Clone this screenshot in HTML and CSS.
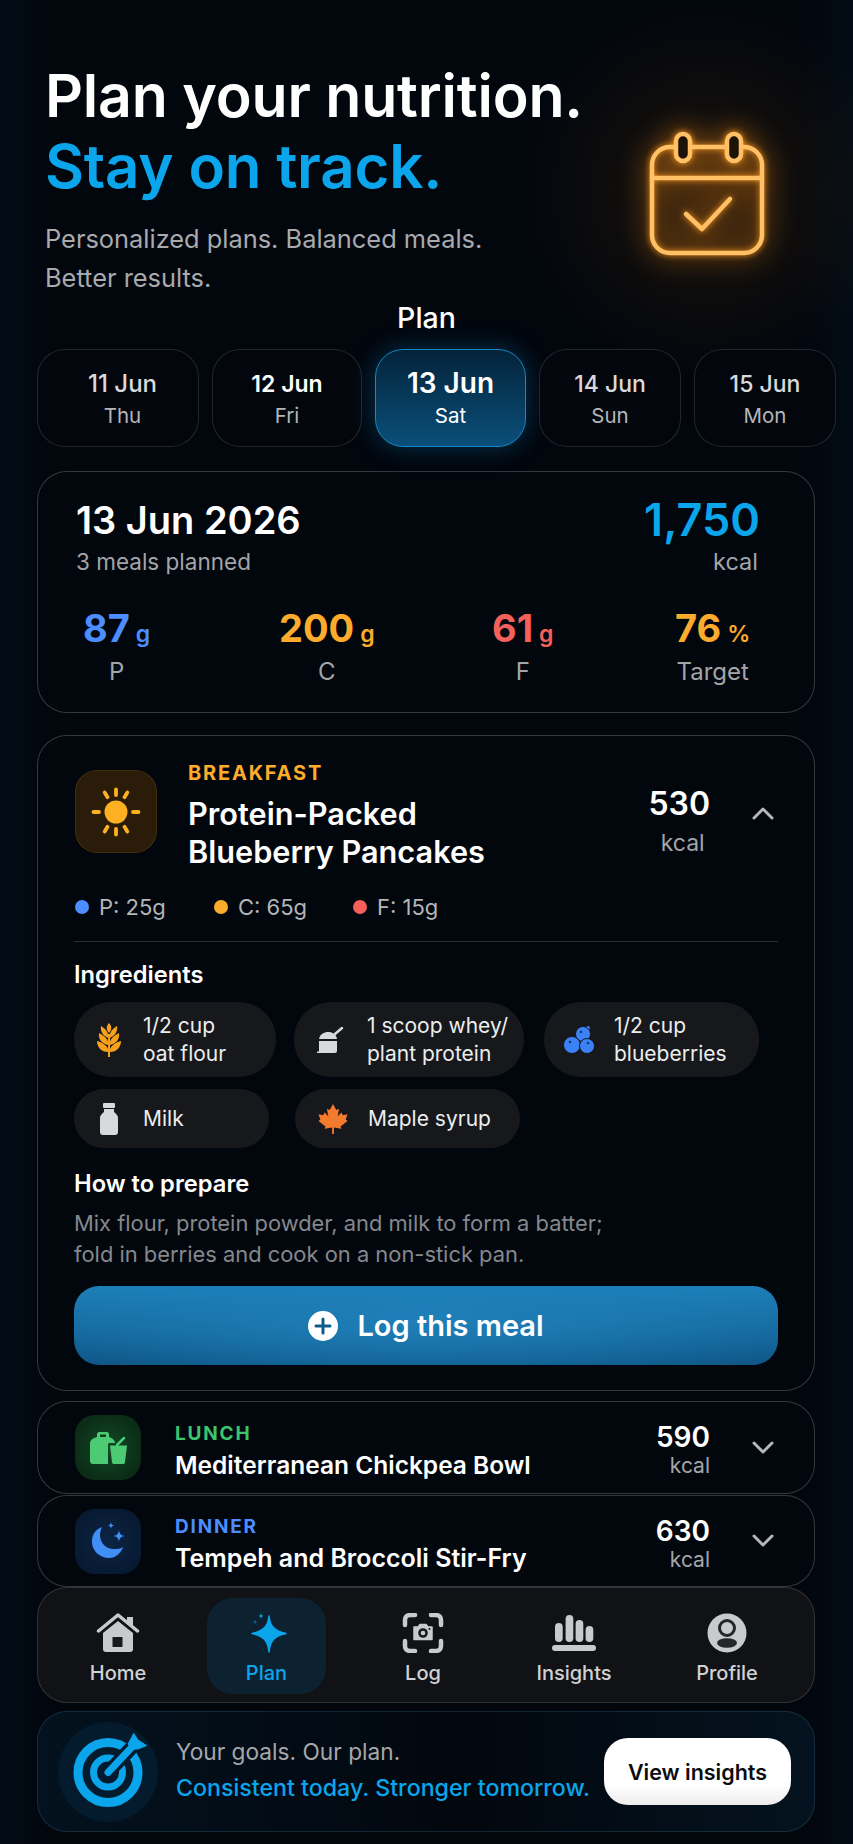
FILE: index.html
```html
<!DOCTYPE html>
<html lang="en">
<head>
  <meta charset="UTF-8">
  <meta name="viewport" content="width=device-width, initial-scale=1">
  <title>Plan</title>
  <link rel="stylesheet" href="styles.css">
</head>
<body>
<div class="page">

  <header class="hero">
    <div class="hero-text">
      <h1>Plan your nutrition.<br><span class="blue">Stay on track.</span></h1>
      <p>Personalized plans. Balanced meals.<br>Better results.</p>
    </div>
    <svg class="hero-icon" viewBox="0 0 125 132" fill="none" stroke="#ffc066" stroke-width="4.500" stroke-linecap="round" stroke-linejoin="round">
      <rect x="6" y="16" width="110" height="106" rx="18" fill="rgba(255,140,20,.04)"/>
      <path d="M6 47H116"/>
      <rect x="30" y="3" width="14" height="27" rx="7" fill="#1d1206"/>
      <rect x="81" y="3" width="14" height="27" rx="7" fill="#1d1206"/>
      <path d="M40 83L56 98L84 68"/>
    </svg>
  </header>

  <h2 class="plan-title">Plan</h2>

  <div class="days">
    <div class="day day-first"><b>11 Jun</b><span>Thu</span></div>
    <div class="day day-bright"><b>12 Jun</b><span>Fri</span></div>
    <div class="day day-active"><b>13 Jun</b><span>Sat</span></div>
    <div class="day"><b>14 Jun</b><span>Sun</span></div>
    <div class="day"><b>15 Jun</b><span>Mon</span></div>
  </div>

  <section class="card summary">
    <div class="summary-top">
      <div>
        <div class="summary-date">13 Jun 2026</div>
        <div class="muted">3 meals planned</div>
      </div>
      <div class="summary-kcal">
        <div class="summary-num">1,750</div>
        <div class="muted">kcal</div>
      </div>
    </div>
    <div class="totals">
      <div class="total"><div class="total-val c-blue">87<small>g</small></div><div class="muted">P</div></div>
      <div class="total"><div class="total-val c-orange">200<small>g</small></div><div class="muted">C</div></div>
      <div class="total"><div class="total-val c-red">61<small>g</small></div><div class="muted">F</div></div>
      <div class="total"><div class="total-val c-orange">76<small>%</small></div><div class="muted">Target</div></div>
    </div>
  </section>

  <section class="card meal-open">
    <div class="meal-head">
      <div class="meal-icon big sun-bg">
        <svg width="52" height="52" viewBox="0 0 52 52" fill="#fdb022" stroke="#fdb022" stroke-width="3.800" stroke-linecap="round">
          <circle cx="26" cy="26" r="11.500" stroke="none"/>
          <path d="M26 3.500V9M26 43V48.500M3.500 26H9M43 26H48.500M14.700 6.500L17.500 11.200M34.500 40.800L37.300 45.500M37.300 6.500L34.500 11.200M17.500 40.800L14.700 45.500"/>
        </svg>
      </div>
      <div class="meal-text">
        <div class="meal-type c-orange">BREAKFAST</div>
        <div class="meal-name">Protein-Packed<br>Blueberry Pancakes</div>
      </div>
      <div class="meal-kcal">
        <div class="meal-num">530</div>
        <div class="muted">kcal</div>
      </div>
      <svg class="chev" width="24" height="14" viewBox="0 0 24 14" fill="none" stroke="#b5b7ba" stroke-width="3" stroke-linecap="round" stroke-linejoin="round"><path d="M3 12L12 3L21 12"/></svg>
    </div>

    <div class="macros">
      <span class="macro"><i class="dot bg-blue"></i>P: 25g</span>
      <span class="macro"><i class="dot bg-orange"></i>C: 65g</span>
      <span class="macro"><i class="dot bg-red"></i>F: 15g</span>
    </div>

    <hr class="line">

    <h3>Ingredients</h3>
    <div class="chips">
      <div class="chip chip-1">
        <svg width="26" height="36" viewBox="0 0 26 36" fill="#f5a11c">
          <path d="M13 12V35" stroke="#f5a11c" stroke-width="2" fill="none"/>
          <path d="M13 1C16 4 16 8 13 11C10 8 10 4 13 1Z"/>
          <path d="M13.800 16C13 11 16 7 21 4C22 9 19 14 13.800 16Z"/>
          <path d="M12.200 16C13 11 10 7 5 4C4 9 7 14 12.200 16Z"/>
          <path d="M13.800 23C13 18 17 14 23 11C24 17 20 22 13.800 23Z"/>
          <path d="M12.200 23C13 18 9 14 3 11C2 17 6 22 12.200 23Z"/>
          <path d="M13.800 30C13 25 18 21 25 19C25 25 21 30 13.800 30Z"/>
          <path d="M12.200 30C13 25 8 21 1 19C1 25 5 30 12.200 30Z"/>
        </svg>
        <span>1/2 cup<br>oat flour</span>
      </div>
      <div class="chip chip-2">
        <svg width="30" height="30" viewBox="0 0 30 30" fill="#d8d9db">
          <path d="M3 14C4 9 8 7 12 7C17 7 20 9 21 14Z"/>
          <path d="M3 16H21V26C21 27 20 28 19 28H1V26.500H3Z"/>
          <path d="M19 9L26 3" fill="none" stroke="#d8d9db" stroke-width="2.500" stroke-linecap="round"/>
        </svg>
        <span>1 scoop whey/<br>plant protein</span>
      </div>
      <div class="chip chip-3">
        <svg width="32" height="30" viewBox="0 0 32 30" fill="#3b82f6" stroke="#16181c">
          <circle cx="25" cy="3" r="2" stroke="none"/>
          <circle cx="20" cy="9" r="7.500"/>
          <circle cx="9" cy="20" r="8.500"/>
          <circle cx="24" cy="21" r="7.500"/>
          <circle cx="18" cy="7" r="1.300" fill="#123a70" stroke="none"/>
          <circle cx="7" cy="17" r="1.300" fill="#123a70" stroke="none"/>
          <circle cx="25" cy="18" r="1.300" fill="#123a70" stroke="none"/>
        </svg>
        <span>1/2 cup<br>blueberries</span>
      </div>
      <div class="chip chip-4">
        <svg width="20" height="32" viewBox="0 0 20 32" fill="#d8d9db">
          <rect x="4" y="0" width="12" height="5" rx="1"/>
          <path d="M5 6H15V9C17 11 19 12 19 15V29C19 31 18 32 16 32H4C2 32 1 31 1 29V15C1 12 3 11 5 9Z"/>
        </svg>
        <span>Milk</span>
      </div>
      <div class="chip chip-5">
        <svg width="30" height="32" viewBox="0 0 32 32" fill="#f47a2e">
          <path d="M16 0L19.500 6.500L22.500 5L21 13L25 9L26.500 12L31.500 11L29.500 16.500L31.500 18L24 24L25 26.500L17 25V32H15V25L7 26.500L8 24L.5 18L2.500 16.500L.5 11L5.500 12L7 9L11 13L9.500 5L12.500 6.500Z"/>
        </svg>
        <span>Maple syrup</span>
      </div>
    </div>

    <h3 class="prep-title">How to prepare</h3>
    <p class="prep">Mix flour, protein powder, and milk to form a batter;<br>fold in berries and cook on a non-stick pan.</p>

    <button class="log-btn">
      <svg width="30" height="30" viewBox="0 0 30 30"><circle cx="15" cy="15" r="15" fill="#fff"/><path d="M15 8V22M8 15H22" stroke="#0f5a8c" stroke-width="3" stroke-linecap="round"/></svg>
      Log this meal
    </button>
  </section>

  <section class="card meal-row lunch">
    <div class="meal-icon green-bg">
      <svg width="37" height="34" viewBox="0 0 37 34" fill="#4ccb74">
        <path fill-rule="evenodd" d="M7 6V3C7 2 8 1 9 1H17C18 1 19 2 19 3V6C22 7 25 9 25 12H19C18 12 18 13 18 14V33H3C1 33 0 32 0 30V13C0 9 3 7 7 6ZM10 3.500V6H16V3.500Z"/>
        <path d="M20 14.500H37L35 31C35 32.500 34 33 33 33H24C23 33 22 32.500 22 31Z"/>
        <path d="M27 14L34 7" fill="none" stroke="#4ccb74" stroke-width="2.500" stroke-linecap="round"/>
      </svg>
    </div>
    <div class="meal-text">
      <div class="meal-type small c-green">LUNCH</div>
      <div class="meal-name small">Mediterranean Chickpea Bowl</div>
    </div>
    <div class="meal-kcal small">
      <div class="meal-num">590</div>
      <div class="muted">kcal</div>
    </div>
    <svg class="chev" width="24" height="14" viewBox="0 0 24 14" fill="none" stroke="#b5b7ba" stroke-width="3" stroke-linecap="round" stroke-linejoin="round"><path d="M3 2L12 11L21 2"/></svg>
  </section>

  <section class="card meal-row dinner">
    <div class="meal-icon blue-bg">
      <svg width="36" height="38" viewBox="0 0 36 38" fill="#3f8ff7">
        <path d="M12 5C4 8 2 14 2 20C2 29 10 36 19 36C26 36 31 31 33 25C30 27 27 27 24 27C16 27 10 21 10 13C10 10 11 7 12 5Z"/>
        <path d="M29 8C29.500 12 31 13.500 35 14C31 14.500 29.500 16 29 20C28.500 16 27 14.500 23 14C27 13.500 28.500 12 29 8Z"/>
        <path d="M21 0C21.300 2.500 22 3.200 24.500 3.500C22 3.800 21.300 4.500 21 7C20.700 4.500 20 3.800 17.500 3.500C20 3.200 20.700 2.500 21 0Z"/>
      </svg>
    </div>
    <div class="meal-text">
      <div class="meal-type small c-blue">DINNER</div>
      <div class="meal-name small">Tempeh and Broccoli Stir-Fry</div>
    </div>
    <div class="meal-kcal small">
      <div class="meal-num">630</div>
      <div class="muted">kcal</div>
    </div>
    <svg class="chev" width="24" height="14" viewBox="0 0 24 14" fill="none" stroke="#b5b7ba" stroke-width="3" stroke-linecap="round" stroke-linejoin="round"><path d="M3 2L12 11L21 2"/></svg>
  </section>

  <nav class="nav">
    <a class="nav-item nav-home">
      <svg width="44" height="40" viewBox="0 0 44 40">
        <path d="M2.500 18L22 2L41.500 18" fill="none" stroke="#c9cacc" stroke-width="3.500" stroke-linecap="round" stroke-linejoin="round"/>
        <path d="M31 4H37V13L31 8Z" fill="#c9cacc"/>
        <path d="M7 20L22 8L37 20V36C37 38 36 39 34 39H10C8 39 7 38 7 36Z" fill="#c9cacc"/>
        <rect x="16.500" y="24" width="10" height="10" fill="#17191c"/>
      </svg>
      Home
    </a>
    <a class="nav-item nav-plan">
      <svg width="44" height="40" viewBox="0 0 44 40" fill="#0ba5ec">
        <path d="M24 3C25 13 29 18 41 20.500C29 23 25 28 24 39C23 28 19 23 7 20.500C19 18 23 13 24 3Z" stroke="#0ba5ec" stroke-width="1.500" stroke-linejoin="round"/>
        <path d="M16 0C16.200 2 17 2.800 19 3C17 3.200 16.200 4 16 6C15.800 4 15 3.200 13 3C15 2.800 15.800 2 16 0Z"/>
        <circle cx="10" cy="9" r="1.500" opacity=".45"/>
      </svg>
      Plan
    </a>
    <a class="nav-item nav-log">
      <svg width="44" height="40" viewBox="0 0 44 40">
        <path d="M4 12V7C4 4 6 2 9 2H14M30 2H35C38 2 40 4 40 7V12M40 28V33C40 36 38 38 35 38H30M14 38H9C6 38 4 36 4 33V28" fill="none" stroke="#c9cacc" stroke-width="4.500" stroke-linecap="round"/>
        <path d="M13 14H17L19 11.500H25L27 14H31V26.500H13Z" fill="#c9cacc" stroke="#c9cacc" stroke-width="1.500" stroke-linejoin="round"/>
        <circle cx="22" cy="20" r="4.800" fill="#17191c"/>
        <circle cx="22" cy="20" r="2.300" fill="#c9cacc"/>
        <circle cx="28.500" cy="16" r="1" fill="#17191c"/>
      </svg>
      Log
    </a>
    <a class="nav-item">
      <svg width="44" height="40" viewBox="0 0 44 40" fill="#c9cacc">
        <rect x="3" y="10" width="7.700" height="19" rx="3.800"/>
        <rect x="13.600" y="2" width="7.700" height="27" rx="3.800"/>
        <rect x="23.600" y="7" width="7.700" height="22" rx="3.800"/>
        <rect x="33.600" y="13" width="7.700" height="16" rx="3.800"/>
        <rect x="0" y="32" width="44" height="6" rx="3"/>
      </svg>
      Insights
    </a>
    <a class="nav-item">
      <svg width="40" height="40" viewBox="0 0 40 40">
        <circle cx="20" cy="20" r="19.500" fill="#c9cacc"/>
        <circle cx="20" cy="15" r="7.500" fill="#c9cacc" stroke="#24262a" stroke-width="3"/>
        <ellipse cx="20" cy="30" rx="10" ry="4.800" fill="#24262a"/>
      </svg>
      Profile
    </a>
  </nav>

  <section class="banner">
    <div class="target">
      <svg class="target-icon" width="76" height="76" viewBox="0 0 76 76" fill="none">
        <circle cx="38" cy="38.500" r="30" stroke="#0ba5ec" stroke-width="9"/>
        <circle cx="38" cy="38.500" r="14.500" stroke="#0ba5ec" stroke-width="7"/>
        <path d="M38 38.500L66 9" stroke="#041b2e" stroke-width="14"/>
        <path d="M38 38.500L62 13" stroke="#0ba5ec" stroke-width="7" stroke-linecap="round"/>
        <path d="M58 10L63.800 -.5L68 6L76.500 11.500L68 15L62 15Z" fill="#0ba5ec" stroke="#0ba5ec" stroke-linejoin="round"/>
      </svg>
    </div>
    <div class="banner-text">
      <div class="banner-line">Your goals. Our plan.</div>
      <div class="banner-line c-sky">Consistent today. Stronger tomorrow.</div>
    </div>
    <button class="insights-btn">View insights</button>
  </section>

</div>
</body>
</html>
```

FILE: styles.css
```css
* {
  box-sizing: border-box;
}
html, body {
  margin: 0;
  padding: 0;
}
body {
  width: 853px;
  height: 1844px;
  overflow: hidden;
  font-family: Inter, "Noto Sans", sans-serif;
  color: #fff;
  background:
    radial-gradient(circle 190px at 706px 190px, rgba(125,72,10,.2), transparent),
    linear-gradient(90deg, #030c15, #02060d 6%, #02060d 94%, #030c15);
}
.page {
  padding: 60px 38px 0 37px;
}

.hero {
  display: flex;
  justify-content: space-between;
  padding-left: 8px;
}
h1 {
  margin: 0;
  font-size: 59px;
  line-height: 71px;
  font-weight: 600;
  letter-spacing: -0.2px;
}
.blue {
  color: #0ba5ec;
  font-size: 60px;
}
.hero-text p {
  margin: 17px 0 0;
  font-size: 25.400px;
  line-height: 39px;
  color: #a8aaad;
}
.hero-icon {
  width: 125px;
  height: 132px;
  margin: 71px 44px 0 0;
  filter: drop-shadow(0 0 3px #ff9a1e) drop-shadow(0 0 14px rgba(255,145,20,.7));
}

.plan-title {
  margin: 5px 0 15px;
  text-align: center;
  font-size: 28.500px;
  line-height: 32px;
  font-weight: 500;
  padding-left: 1px;
}

.days {
  display: grid;
  grid-template-columns: 162px 150px 151px 142px 142px;
  column-gap: 13px;
  margin-right: -22px;
}
.day {
  height: 98px;
  border: 1px solid rgba(255,255,255,.13);
  border-radius: 28px;
  background: #03070d;
  display: flex;
  flex-direction: column;
  align-items: center;
  padding-top: 19px;
  color: #b4b6b9;
}
.day b {
  font-size: 23px;
  line-height: 30px;
  font-weight: 500;
  color: #d9dadb;
}
.day span {
  margin-top: 4px;
  font-size: 20.500px;
  line-height: 26px;
}
.day-first {
  padding-left: 9px;
}
.day-first b {
  font-size: 24px;
}
.day-bright b {
  color: #fff;
  font-weight: 600;
}
.day-active {
  border-color: #1689c8;
  background: linear-gradient(180deg, #04233a, #0a4f7a);
  box-shadow: 0 0 26px rgba(14,135,205,.35);
  padding-top: 17px;
  color: #fff;
}
.day-active b {
  font-size: 28px;
  line-height: 32px;
  font-weight: 600;
  color: #fff;
}

.card {
  border: 1px solid rgba(255,255,255,.2);
  border-radius: 30px;
  background: #02060d;
}
.muted {
  font-size: 22.500px;
  line-height: 28px;
  color: #a3a5a9;
}

.summary {
  height: 242px;
  margin-top: 24px;
  padding: 26px 38px 0;
}
.summary-top {
  display: flex;
  justify-content: space-between;
}
.summary-date {
  font-size: 38px;
  line-height: 44px;
  font-weight: 600;
  margin-bottom: 6px;
}
.summary-kcal {
  text-align: right;
  padding-right: 16px;
}
.summary-kcal .muted {
  padding-right: 2px;
  font-size: 23.500px;
}
.summary-num {
  font-size: 45px;
  line-height: 44px;
  font-weight: 600;
  margin-bottom: 6px;
  color: #0ba5ec;
}
.totals {
  display: grid;
  grid-template-columns: 196px 213px 183px auto;
  justify-items: start;
  margin-top: 29px;
  padding-left: 7px;
}
.total {
  text-align: center;
}
.total .muted {
  font-size: 24px;
}
.total-val {
  font-size: 38px;
  line-height: 46px;
  font-weight: 700;
  margin-bottom: 1px;
}
.total-val small {
  font-size: 23px;
  font-weight: 600;
  margin-left: 6px;
}
.c-blue { color: #4c8dff; }
.c-orange { color: #fdab2c; }
.c-red { color: #f5605a; }
.c-green { color: #3cc56c; }
.c-sky { color: #0ba5ec; }
.bg-blue { background: #4c8dff; }
.bg-orange { background: #fdab2c; }
.bg-red { background: #f5605a; }

.meal-open {
  margin-top: 22px;
  height: 656px;
  padding: 24px 36px 0;
}
.meal-head {
  display: flex;
  align-items: flex-start;
}
.meal-icon {
  flex: none;
  display: flex;
  align-items: center;
  justify-content: center;
  width: 66px;
  height: 65px;
  border-radius: 20px;
}
.meal-icon.big {
  width: 82px;
  height: 83px;
  border-radius: 22px;
  margin: 10px 0 0 1px;
}
.sun-bg {
  background: #2a1c08;
  box-shadow: inset 0 0 0 1px rgba(255,180,60,.12);
}
.green-bg {
  background: radial-gradient(circle at center, #114a25, #0b2c16 75%);
}
.blue-bg {
  background: radial-gradient(circle at center, #0c2444, #081a33 75%);
}
.meal-text {
  margin-left: 31px;
}
.meal-type {
  font-size: 20px;
  line-height: 24px;
  font-weight: 700;
  letter-spacing: 1.800px;
  margin: 1px 0 10px;
}
.meal-name {
  font-size: 30.700px;
  line-height: 38px;
  font-weight: 600;
}
.meal-kcal {
  margin: 24px 41px 0 auto;
  text-align: center;
}
.meal-kcal .muted {
  font-size: 23px;
  padding-left: 7px;
}
.meal-num {
  font-size: 32px;
  line-height: 40px;
  font-weight: 600;
  margin-bottom: 5px;
}
.chev {
  flex: none;
  margin: 46px 3px 0 0;
}

.macros {
  display: flex;
  margin: 23px 0 0 1px;
  font-size: 22px;
  line-height: 26px;
  color: #b4b6b9;
}
.macro {
  display: flex;
  align-items: center;
  width: 139px;
}
.dot {
  width: 14px;
  height: 14px;
  border-radius: 50%;
  margin-right: 10px;
}
.line {
  margin: 21px 0 0;
  height: 1px;
  border: 0;
  background: rgba(255,255,255,.16);
}
h3 {
  margin: 19px 0 13px;
  font-size: 23.700px;
  line-height: 28px;
  font-weight: 600;
}
.chips {
  display: flex;
  flex-wrap: wrap;
  column-gap: 18px;
  row-gap: 12px;
}
.chip {
  display: flex;
  align-items: center;
  height: 75px;
  border-radius: 37px;
  background: #16181c;
  font-size: 21px;
  line-height: 28px;
  color: #eceded;
  padding-left: 22px;
}
.chip svg {
  flex: none;
}
.chip-1 { width: 202px; }
.chip-1 span { margin-left: 21px; }
.chip-2 { width: 230px; padding-left: 22px; }
.chip-2 span { margin-left: 21px; }
.chip-3 { width: 215px; margin-left: 2px; padding-left: 19px; }
.chip-3 span { margin-left: 19px; }
.chip-4 { width: 195px; height: 59px; padding-left: 25px; border-radius: 30px; }
.chip-4 span { margin-left: 24px; }
.chip-5 { width: 225px; height: 59px; margin-left: 8px; padding-left: 23px; border-radius: 30px; }
.chip-5 span { margin-left: 20px; }
.prep-title {
  margin: 22px 0 1px;
}
.prep {
  margin: 10px 0 16px;
  font-size: 21.900px;
  line-height: 31px;
  color: #85888c;
}
.log-btn {
  display: flex;
  align-items: center;
  justify-content: center;
  gap: 19px;
  width: 100%;
  height: 79px;
  border: 0;
  border-radius: 25px;
  background: radial-gradient(ellipse 60% 90% at 50% 40%, #1f7fb8, transparent), linear-gradient(180deg, #1c80b9, #0f5687);
  color: #fff;
  font-family: inherit;
  font-size: 29px;
  font-weight: 600;
}

.meal-row {
  display: flex;
  align-items: center;
  padding: 0 36px 0 37px;
  height: 93px;
}
.lunch {
  margin-top: 10px;
}
.dinner {
  margin-top: 1px;
  height: 92px;
}
.meal-row .meal-text {
  margin-left: 34px;
  padding-top: 7px;
}
.meal-type.small {
  font-size: 19px;
  line-height: 22px;
  letter-spacing: 1.800px;
  margin: 0 0 5px;
}
.meal-name.small {
  font-size: 24.500px;
  line-height: 30px;
}
.dinner .meal-name.small {
  font-size: 25px;
}
.meal-kcal.small {
  margin: 0 41px 0 auto;
  padding-top: 4px;
  text-align: right;
}
.meal-kcal.small .meal-num {
  font-size: 28px;
  line-height: 34px;
  margin: 0 0 -1px;
}
.meal-kcal.small .muted {
  font-size: 21px;
  line-height: 26px;
  padding-left: 0;
}
.meal-row .chev {
  margin: 0 3px 0 0;
}

.nav {
  display: grid;
  grid-template-columns: 169px 119px 175px 146px 160px;
  height: 116px;
  padding: 10px 0 0 0;
  border: 1px solid rgba(255,255,255,.14);
  border-radius: 30px;
  background: #101215;
}
.nav-item {
  display: flex;
  flex-direction: column;
  align-items: center;
  height: 96px;
  padding-top: 15px;
  gap: 8px;
  font-size: 20px;
  line-height: 24px;
  font-weight: 500;
  color: #d0d1d3;
}
.nav-home {
  padding-right: 9px;
}
.nav-log {
  padding-left: 19px;
}
.nav-plan {
  border-radius: 26px;
  background: #0d2231;
  color: #0ba5ec;
}

.banner {
  display: flex;
  align-items: center;
  height: 121px;
  margin-top: 8px;
  padding: 0 23px 0 20px;
  border: 1px solid rgba(90,150,190,.2);
  border-radius: 30px;
  background: linear-gradient(90deg, #03121e, #02070e 55%, #04131f);
}
.target {
  flex: none;
  display: flex;
  align-items: center;
  justify-content: center;
  width: 100px;
  height: 100px;
  border-radius: 50%;
  background: #041b2e;
}
.target-icon {
  overflow: visible;
}
.banner-text {
  margin-left: 18px;
  padding-bottom: 3px;
  white-space: nowrap;
}
.banner-line {
  font-size: 22.700px;
  line-height: 36px;
  color: #a5a7aa;
}
.banner-line.c-sky {
  color: #0ba5ec;
  font-size: 23.200px;
  font-weight: 500;
}
.insights-btn {
  flex: none;
  width: 187px;
  height: 67px;
  margin-left: auto;
  border: 0;
  border-radius: 24px;
  background: linear-gradient(180deg, #fff 70%, #ececec);
  color: #0b0d10;
  font-family: inherit;
  font-size: 21.500px;
  font-weight: 600;
}
```
